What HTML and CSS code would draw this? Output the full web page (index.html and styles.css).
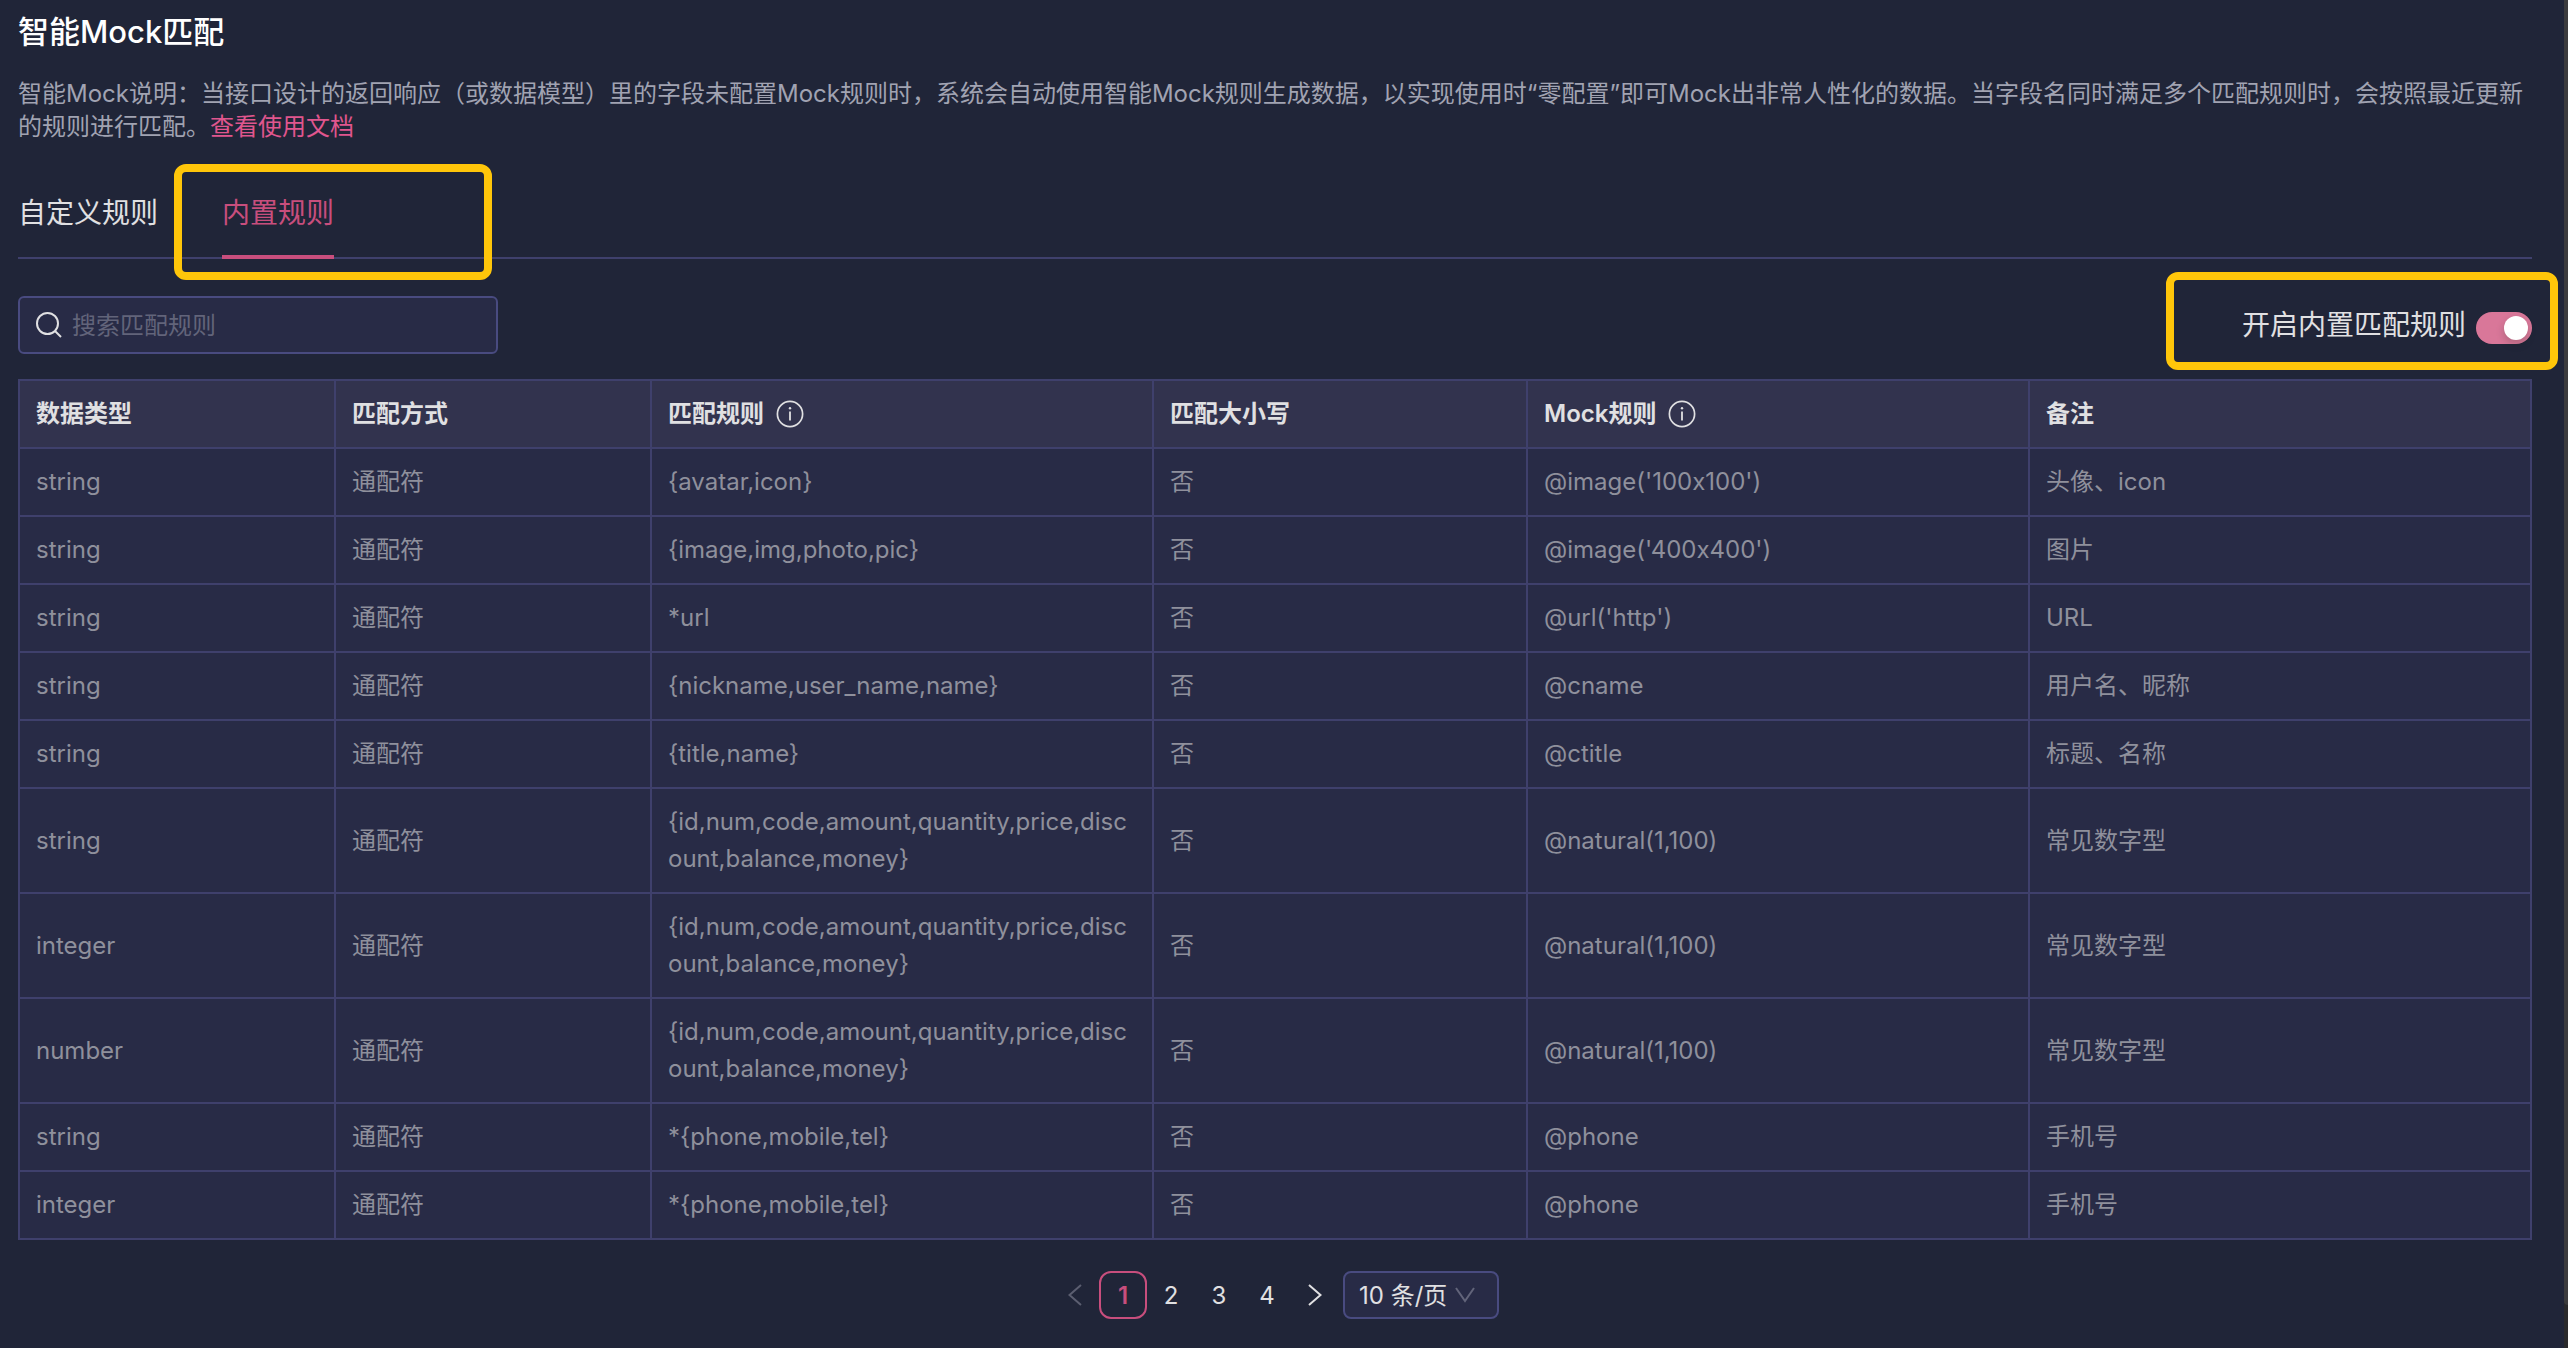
FILE: index.html
```html
<!DOCTYPE html>
<html lang="zh-CN">
<head>
<meta charset="utf-8">
<meta name="viewport" content="width=device-width, initial-scale=1">
<title>智能Mock匹配</title>
<link rel="stylesheet" href="styles.css">
</head>
<body>
<svg class="sprite" aria-hidden="true">
  <symbol id="info" viewBox="0 0 28 28">
    <circle cx="14" cy="14" r="12.6" fill="none" stroke="currentColor" stroke-width="1.7"/>
    <circle cx="14" cy="8.2" r="1.2" fill="currentColor"/>
    <path d="M14 11.6V20.4" stroke="currentColor" stroke-width="1.8"/>
  </symbol>
</svg>
<main class="page">
  <h1 class="title">智能Mock匹配</h1>
  <p class="intro">智能Mock说明：当接口设计的返回响应（或数据模型）里的字段未配置Mock规则时，系统会自动使用智能Mock规则生成数据，以实现使用时“零配置”即可Mock出非常人性化的数据。当字段名同时满足多个匹配规则时，会按照最近更新的规则进行匹配。<a href="#docs">查看使用文档</a></p>

  <nav class="tabs">
    <button class="tab" type="button">自定义规则</button>
    <button class="tab tab-active" type="button">内置规则<span class="mark mark-tab"></span></button>
  </nav>

  <div class="toolbar">
    <label class="search">
      <svg class="search-icon" viewBox="0 0 26 26" fill="none" stroke="currentColor" stroke-width="2" aria-hidden="true"><circle cx="11.5" cy="11.5" r="10.5"/><path d="M19 19l6 6"/></svg>
      <input class="search-input" type="text" placeholder="搜索匹配规则" aria-label="搜索匹配规则">
    </label>
    <div class="toggle">
      <label for="builtin">开启内置匹配规则</label>
      <input class="switch" id="builtin" type="checkbox" role="switch" checked>
      <span class="mark mark-toggle"></span>
    </div>
  </div>

  <table class="rules">
    <colgroup><col class="c-type"><col class="c-type"><col><col class="c-case"><col><col></colgroup>
    <thead>
      <tr><th>数据类型</th><th>匹配方式</th><th><span class="th-info">匹配规则<svg class="info"><use href="#info"/></svg></span></th><th>匹配大小写</th><th><span class="th-info">Mock规则<svg class="info"><use href="#info"/></svg></span></th><th>备注</th></tr>
    </thead>
    <tbody>
      <tr><td>string</td><td>通配符</td><td>{avatar,icon}</td><td>否</td><td>@image('100x100')</td><td>头像、icon</td></tr>
      <tr><td>string</td><td>通配符</td><td>{image,img,photo,pic}</td><td>否</td><td>@image('400x400')</td><td>图片</td></tr>
      <tr><td>string</td><td>通配符</td><td>*url</td><td>否</td><td>@url('http')</td><td>URL</td></tr>
      <tr><td>string</td><td>通配符</td><td>{nickname,user_name,name}</td><td>否</td><td>@cname</td><td>用户名、昵称</td></tr>
      <tr><td>string</td><td>通配符</td><td>{title,name}</td><td>否</td><td>@ctitle</td><td>标题、名称</td></tr>
      <tr><td>string</td><td>通配符</td><td>{id,num,code,amount,quantity,price,discount,balance,money}</td><td>否</td><td>@natural(1,100)</td><td>常见数字型</td></tr>
      <tr><td>integer</td><td>通配符</td><td>{id,num,code,amount,quantity,price,discount,balance,money}</td><td>否</td><td>@natural(1,100)</td><td>常见数字型</td></tr>
      <tr><td>number</td><td>通配符</td><td>{id,num,code,amount,quantity,price,discount,balance,money}</td><td>否</td><td>@natural(1,100)</td><td>常见数字型</td></tr>
      <tr><td>string</td><td>通配符</td><td>*{phone,mobile,tel}</td><td>否</td><td>@phone</td><td>手机号</td></tr>
      <tr><td>integer</td><td>通配符</td><td>*{phone,mobile,tel}</td><td>否</td><td>@phone</td><td>手机号</td></tr>
    </tbody>
  </table>

  <nav class="pager" aria-label="分页">
    <button class="page-btn" type="button" disabled aria-label="上一页"><svg class="arrow" viewBox="0 0 14 22"><path d="M13 1L1.500 11L13 21"/></svg></button>
    <button class="page-btn page-current" type="button" aria-current="page">1</button>
    <button class="page-btn" type="button">2</button>
    <button class="page-btn" type="button">3</button>
    <button class="page-btn" type="button">4</button>
    <button class="page-btn" type="button" aria-label="下一页"><svg class="arrow" viewBox="0 0 14 22"><path d="M1 1L12.500 11L1 21"/></svg></button>
    <div class="size">
      <select class="size-select" aria-label="每页条数"><option>10 条/页</option><option>20 条/页</option><option>50 条/页</option></select>
      <svg class="size-arrow" viewBox="0 0 20 16" aria-hidden="true"><path d="M1 1L10 14L19 1"/></svg>
    </div>
  </nav>
</main>
<div class="scrollbar"><div class="thumb"></div></div>
</body>
</html>
```

FILE: styles.css
```css
* { box-sizing: border-box; }

body {
  display: flex;
  min-height: 100vh;
  margin: 0;
  background: #202538;
  color: #e0e0e2;
  font: 24px/37px Inter, "Noto Sans CJK SC", sans-serif;
  font-variant-ligatures: no-contextual;
}

button, input, select { font: inherit; color: inherit; }
button { padding: 0; border: 0; background: none; cursor: pointer; }

.sprite { position: absolute; width: 0; height: 0; }

.page { flex: 1; min-width: 0; padding: 8px 32px 24px 18px; }

.title {
  margin: 0;
  color: #fff;
  font-size: 31px;
  font-weight: 500;
  line-height: 48px;
}

.intro { margin: 21px 0 23px; color: #a1a3b2; line-height: 33px; }
.intro a { color: #e0568e; text-decoration: none; }

.tabs {
  display: flex;
  gap: 64px;
  border-bottom: 2px solid #3f406c;
}
.tab {
  position: relative;
  height: 93px;
  margin-bottom: -2px;
  padding-top: 6px;
  border-bottom: 4px solid transparent;
  font-size: 28px;
}
.tab-active { border-color: #c84e7d; color: #c84e7d; }

/* Highlight frames drawn over the page */
.mark {
  position: absolute;
  border: 8px solid #ffc60a;
  border-radius: 12px;
  pointer-events: none;
}
.mark-tab { top: -2px; bottom: -25px; left: -48px; width: 318px; }
.mark-toggle { top: -24px; right: -26px; bottom: -16px; width: 392px; }

.toolbar {
  display: flex;
  justify-content: space-between;
  margin: 37px 0 25px;
}
.search {
  display: flex;
  align-items: center;
  gap: 10px;
  width: 480px;
  height: 58px;
  padding: 0 16px;
  border: 2px solid #494b80;
  border-radius: 6px;
  background: #282b46;
}
.search-icon { width: 26px; height: 26px; flex: none; }
.search-input {
  flex: 1;
  min-width: 0;
  padding: 0;
  border: 0;
  outline: 0;
  background: none;
}
.search-input::placeholder { color: #62647a; opacity: 1; }

.toggle {
  position: relative;
  display: flex;
  align-items: center;
  gap: 10px;
  font-size: 28px;
}
.switch {
  width: 56px;
  height: 32px;
  margin: 6px 0 0;
  padding: 4px;
  border-radius: 16px;
  background: #d97799;
  appearance: none;
}
.switch::before {
  content: "";
  display: block;
  width: 24px;
  height: 24px;
  border-radius: 12px;
  background: #fff;
  box-shadow: 0 4px 8px rgba(0, 35, 11, .2);
}
.switch:checked::before { margin-left: auto; }

.rules {
  width: 100%;
  border-collapse: collapse;
  table-layout: fixed;
  background: #282b46;
}
.c-type { width: 316px; }
.c-case { width: 374px; }
.rules th, .rules td {
  padding: 14px 16px 15px;
  border: 2px solid #3f406c;
  text-align: left;
  word-break: break-all;
}
.rules th { background: #32334e; font-weight: 600; }
.rules td { color: #8f909c; }
.th-info { display: flex; align-items: center; gap: 12px; }
.info { width: 28px; height: 28px; }

.pager { display: flex; justify-content: center; margin-top: 31px; }
.page-btn {
  display: flex;
  align-items: center;
  justify-content: center;
  width: 48px;
  height: 48px;
  border-radius: 12px;
}
.page-btn:disabled { color: #5b5e70; }
.page-current { border: 2px solid #c84e7d; color: #c84e7d; font-weight: 600; }
.arrow { width: 14px; height: 22px; fill: none; stroke: currentColor; stroke-width: 2; }
.size { position: relative; width: 156px; margin-left: 4px; }
.size-select {
  width: 100%;
  height: 48px;
  padding: 0 14px;
  border: 2px solid #494b80;
  border-radius: 8px;
  background: #282b46;
  appearance: none;
}
.size-arrow {
  position: absolute;
  top: 16px;
  right: 24px;
  width: 20px;
  height: 16px;
  fill: none;
  stroke: #62647a;
  stroke-width: 2;
  pointer-events: none;
}

.scrollbar { display: flex; width: 4px; padding-bottom: 43px; background: #2a2a2c; }
.thumb { flex: 1; border-bottom-left-radius: 4px; background: #3b3b3d; }
```
